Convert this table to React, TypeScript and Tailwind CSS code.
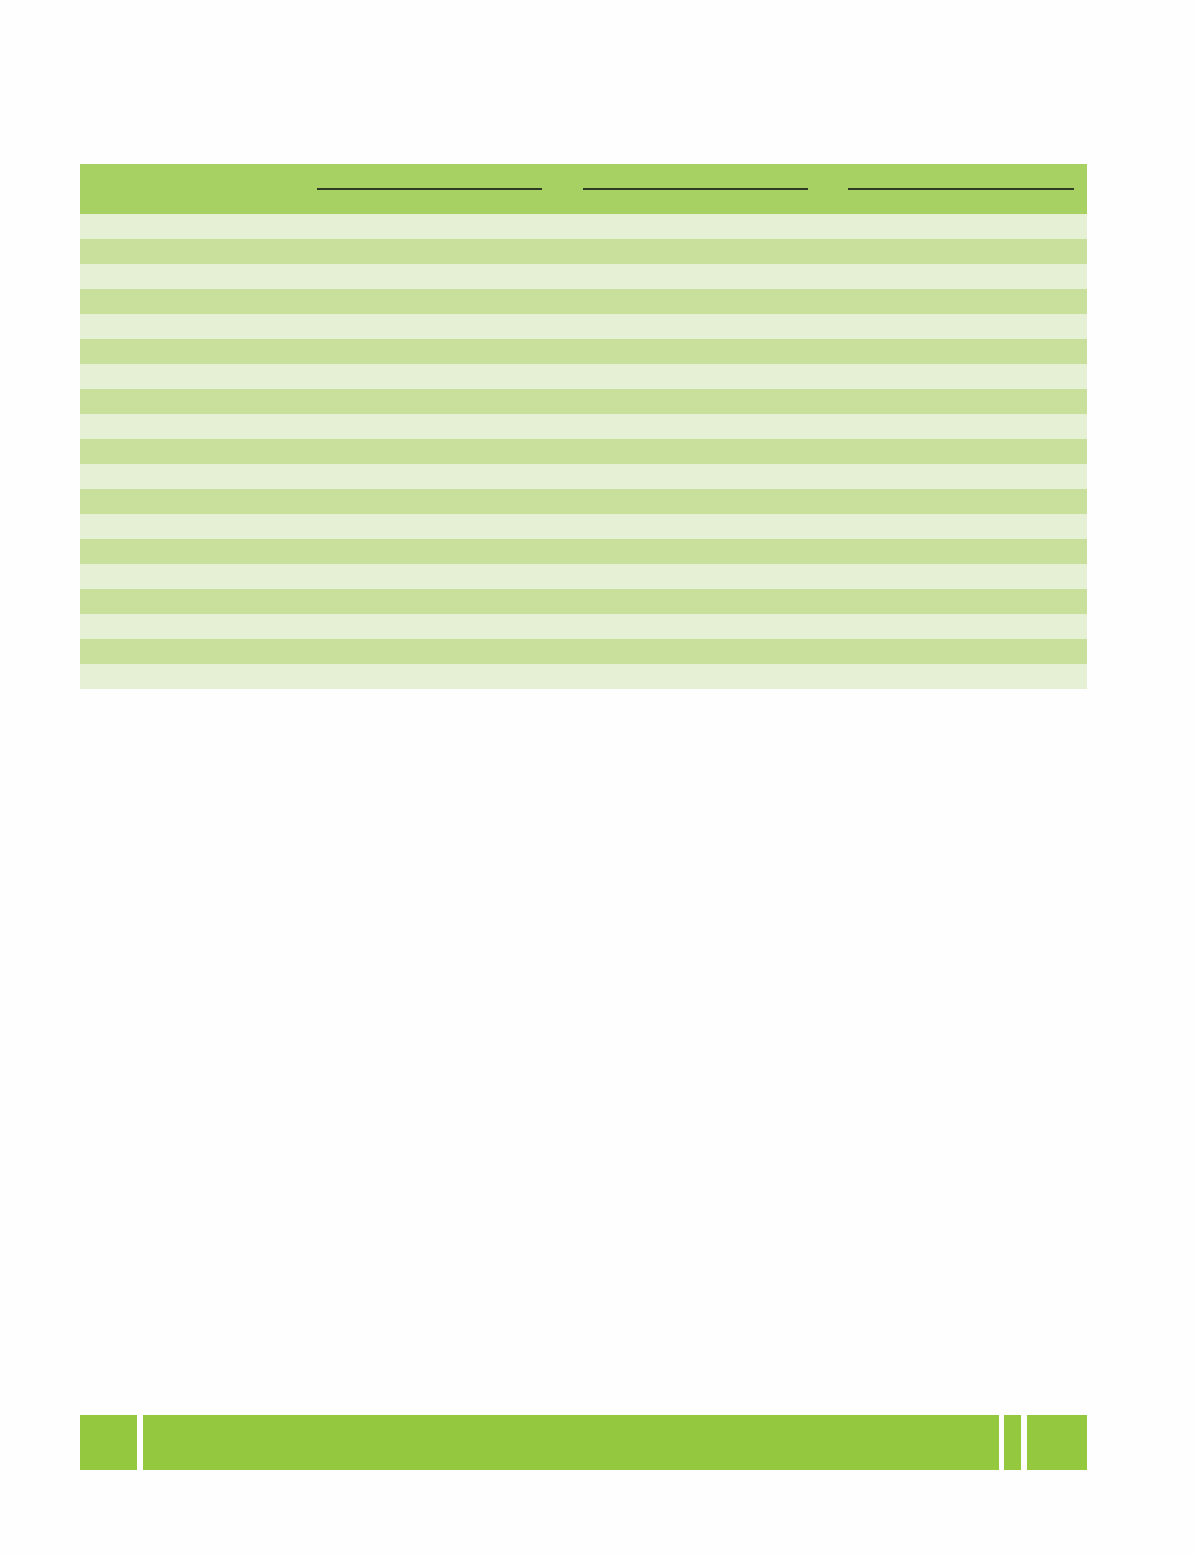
export default function App() {
  const rows = Array.from({ length: 19 }, (_, i) => i);

  return (
    <main className="min-h-[1557px] w-full bg-[#fefefe] pl-[80px] pr-[107px] pt-[164px] font-['Liberation_Sans',sans-serif]">
      {/* Table */}
      <div className="w-full">
        <div className="flex h-[50px] items-center bg-[#a8d164] pl-[237px]">
          <div className="h-[1.5px] w-[225px] bg-[#2e3a24]" />
          <div className="ml-[41px] h-[1.5px] w-[225px] bg-[#2e3a24]" />
          <div className="ml-[40px] h-[1.5px] w-[226px] bg-[#2e3a24]" />
        </div>
        {rows.map((i) => (
          <div
            key={i}
            className={i % 2 === 0 ? "h-[25px] bg-[#e6f0d4]" : "h-[25px] bg-[#c8e09b]"}
          />
        ))}
      </div>

      {/* Footer bar */}
      <div className="mt-[726px] flex h-[55px] w-full">
        <div className="w-[57px] bg-[#93c83f]" />
        <div className="ml-[6px] flex-1 bg-[#93c83f]" />
        <div className="ml-[5px] w-[17px] bg-[#93c83f]" />
        <div className="ml-[6px] w-[60px] bg-[#93c83f]" />
      </div>
    </main>
  );
}
